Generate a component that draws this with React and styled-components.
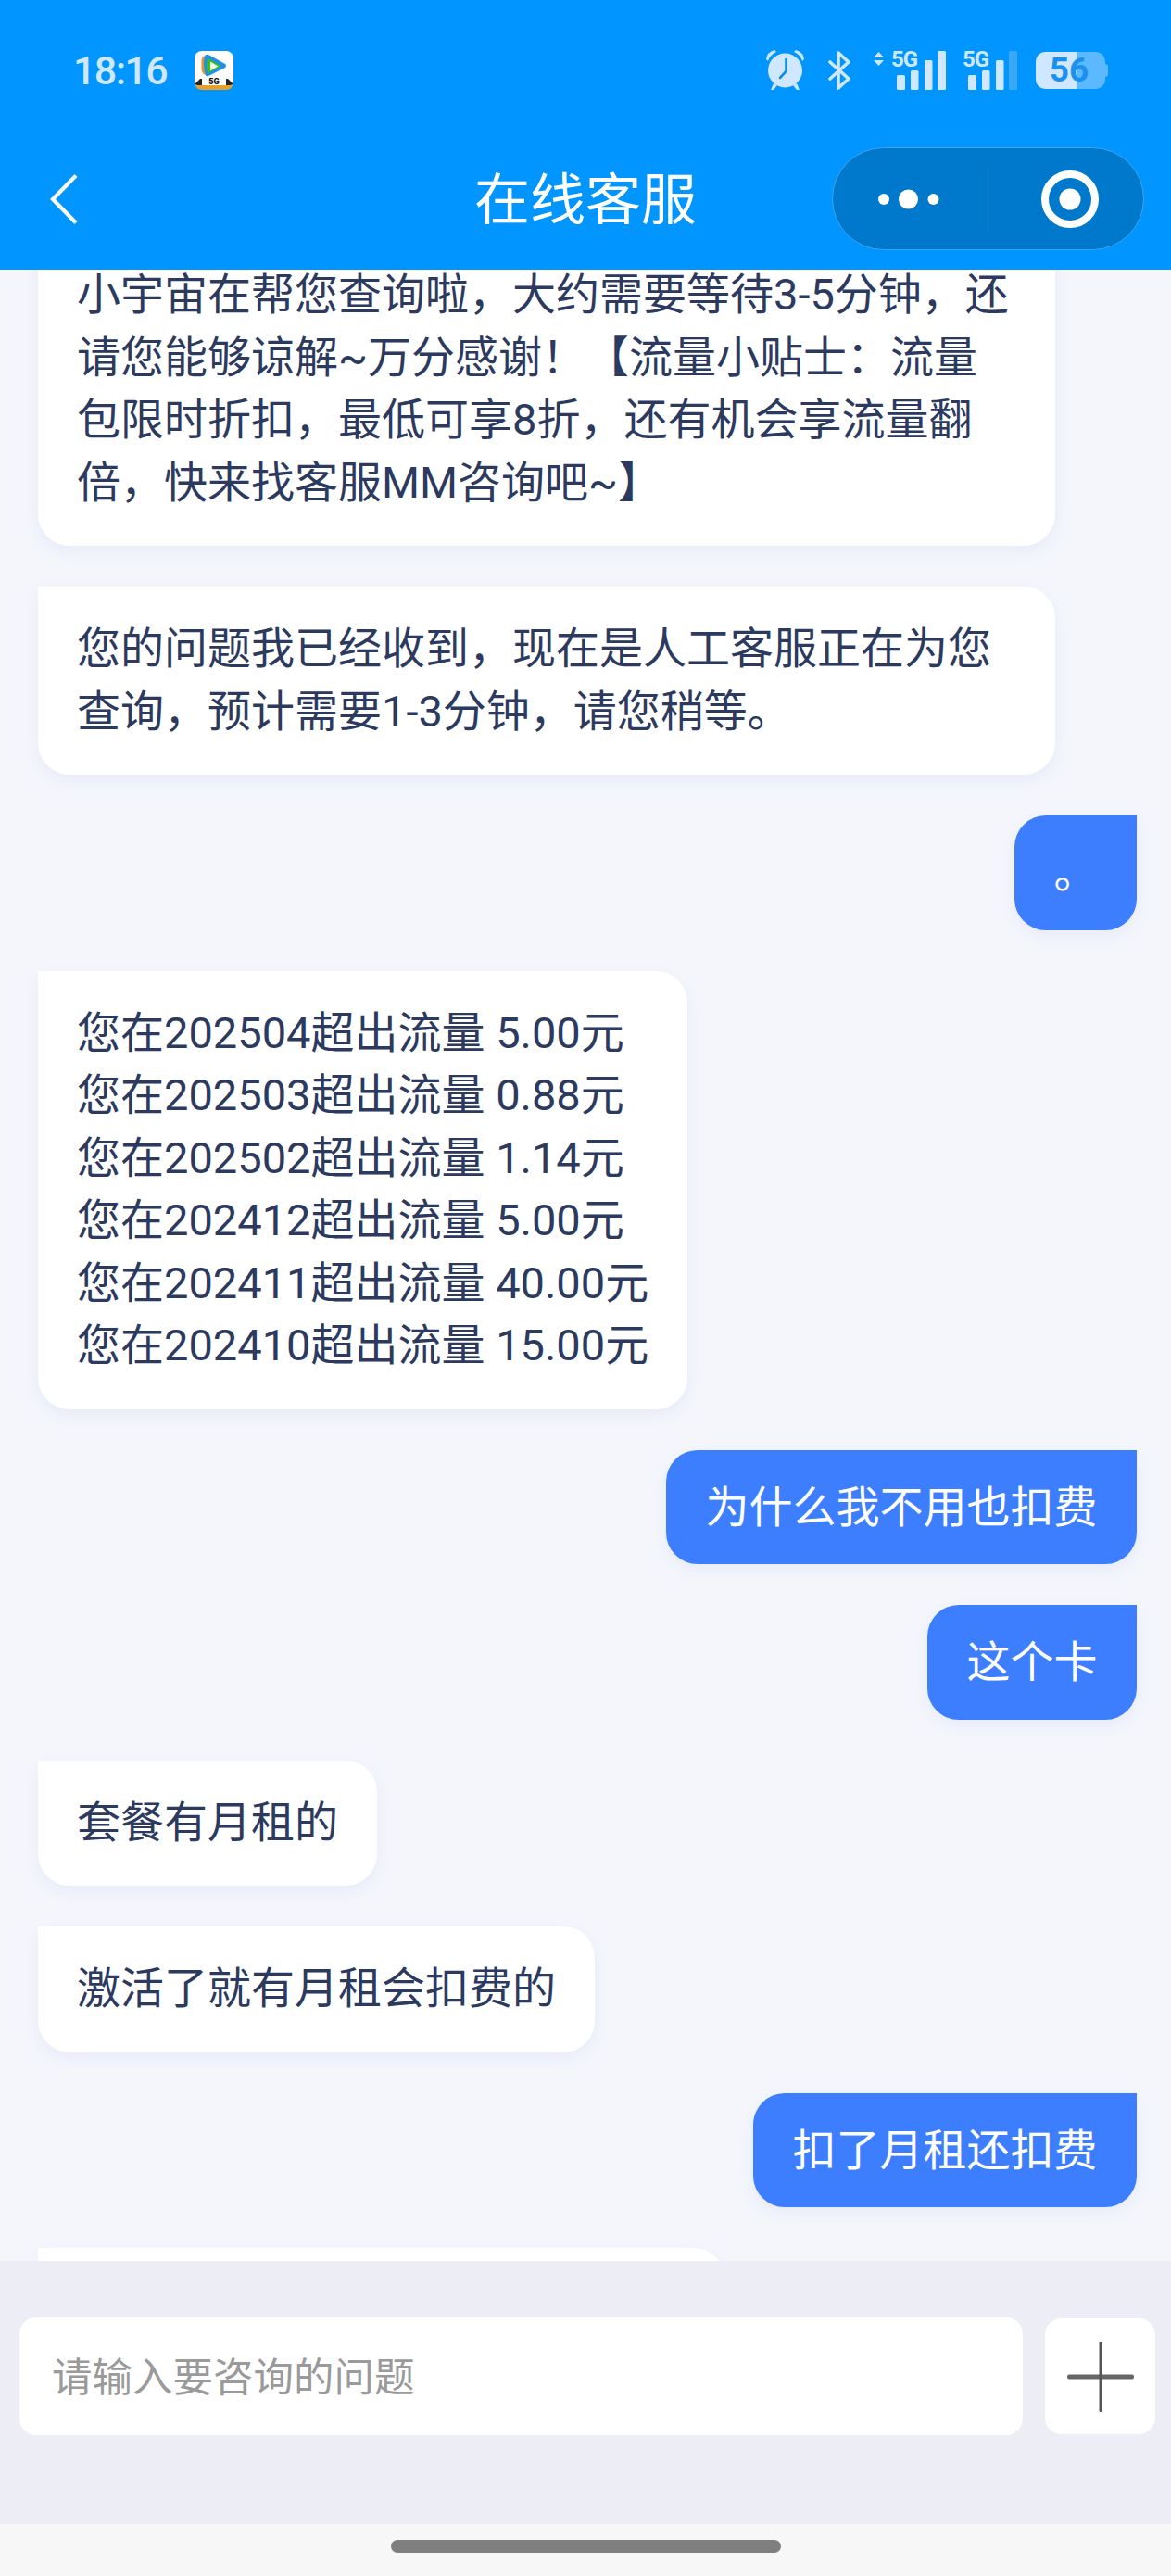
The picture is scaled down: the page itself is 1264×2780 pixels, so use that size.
import React from 'react'
import styled, { createGlobalStyle } from 'styled-components'

const GlobalStyle = createGlobalStyle`
  html, body {
    margin: 0;
    padding: 0;
    background: #f4f6fc;
  }
  * {
    box-sizing: border-box;
  }
`

const Page = styled.div`
  width: 1264px;
  height: 2780px;
  display: flex;
  flex-direction: column;
  overflow: hidden;
  background: #f4f6fc;
  font-family: Roboto, 'Noto Sans CJK SC', 'Noto Sans', sans-serif;
`

const Header = styled.header`
  flex: 0 0 291px;
  background: #0095ff;
  position: relative;
  z-index: 2;
`

const StatusBar = styled.div`
  height: 151px;
  display: flex;
  align-items: center;
  padding: 0 71px 0 79px;
`

const Time = styled.span`
  font-family: Roboto, 'Liberation Sans', sans-serif;
  font-size: 43px;
  font-weight: 500;
  letter-spacing: -1.6px;
  color: #cfe8ff;
  margin-right: 30px;
`

const StatusIcons = styled.div`
  margin-left: auto;
  display: flex;
  align-items: center;
  gap: 25px;
`

const SignalGroup = styled.div`
  display: flex;
  align-items: center;
  gap: 15px;
  height: 50px;
  margin-top: -6px;
  margin-right: -7px;
`

const Battery = styled.div`
  position: relative;
  width: 75px;
  height: 40px;
  border-radius: 10px;
  background: linear-gradient(to right, #cfe8ff 0 44px, #5cb8ff 44px 100%);
  display: flex;
  align-items: center;
  justify-content: center;
  font-family: Roboto, 'Liberation Sans', sans-serif;
  font-size: 37px;
  font-weight: 700;
  color: #1c90ee;
  line-height: 40px;
  padding-right: 3px;

  &::after {
    content: '';
    position: absolute;
    top: 13px;
    right: -3px;
    width: 3px;
    height: 14px;
    border-radius: 0 3px 3px 0;
    background: #5cb8ff;
  }
`

const NavBar = styled.nav`
  display: grid;
  grid-template-columns: 1fr auto 1fr;
  align-items: center;
  padding: 8px 29px 21px 29px;
`

const BackButton = styled.div`
  display: flex;
  align-items: center;
  padding-left: 25px;
`

const Title = styled.h1`
  margin: 4px 0 0;
  font-size: 60px;
  font-weight: 400;
  line-height: 80px;
  color: #fff;
`

const Capsule = styled.div`
  justify-self: end;
  width: 337px;
  height: 111px;
  border-radius: 56px;
  background: #0079cc;
  border: 1.5px solid #3fa5ee;
  display: flex;
  align-items: center;
`

const CapsuleCell = styled.div`
  flex: ${(p) => (p.$divided ? '1' : '0 0 167px')};
  height: 67px;
  display: flex;
  align-items: center;
  justify-content: center;
  border-left: ${(p) => (p.$divided ? '1.5px solid #3fa5ee' : 'none')};
  padding: ${(p) => (p.$divided ? '0 0 0 8px' : '0 3px 0 0')};
`

const ChatArea = styled.main`
  flex: 1;
  min-height: 0;
  overflow: hidden;
`

const MessageList = styled.div`
  display: flex;
  flex-direction: column;
  gap: 44px;
  margin-top: -40px;
  padding: 0 37px 0 41px;
`

const Bubble = styled.div`
  width: ${(p) => p.$width || 'fit-content'};
  font-size: 47px;
  line-height: 67.5px;
  white-space: nowrap;
  box-shadow: 0 6px 16px rgba(70, 100, 200, 0.07);
`

const AgentBubble = styled(Bubble)`
  align-self: flex-start;
  padding: 33px 42px 35px;
  color: #2c3a60;
  background: #fff;
  border-radius: 0 34px 34px 34px;
`

const UserBubble = styled(Bubble)`
  align-self: flex-end;
  padding: 28px 42.5px;
  color: #fff;
  background: #3d7eff;
  border-radius: 34px 0 34px 34px;
`

const InputPanel = styled.footer`
  flex: 0 0 284px;
  position: relative;
  z-index: 2;
  background: #ecedf5;
  display: flex;
  align-items: flex-start;
  gap: 24px;
  padding: 61px 17px 0 21px;
`

const TextInput = styled.input`
  flex: 1;
  min-width: 0;
  height: 127px;
  border: none;
  outline: none;
  border-radius: 18px;
  background: #fff;
  padding: 3px 35px 0;
  font-family: inherit;
  font-size: 43.5px;
  color: #2c3a60;

  &::placeholder {
    color: #9a9a9a;
    opacity: 1;
  }
`

const AddButton = styled.div`
  flex: 0 0 119px;
  height: 125px;
  margin-top: 1px;
  border-radius: 18px;
  background: #fff;
  display: flex;
  align-items: center;
  justify-content: center;
`

const HomeArea = styled.div`
  flex: 0 0 56px;
  position: relative;
  z-index: 2;
  background: #f7f7f7;
  display: flex;
  justify-content: center;
  padding-top: 17px;
`

const HomeBar = styled.div`
  width: 421px;
  height: 14px;
  border-radius: 7px;
  background: #7f7f7f;
`

const AppIcon = () => (
  <svg width="42" height="42" viewBox="0 0 42 42">
    <rect x="0" y="0" width="42" height="41" rx="8" fill="#fff" />
    <path d="M1 35 H41 Q41 42 34 42 H8 Q1 42 1 35 Z" fill="#e5a12c" />
    <path d="M0 36 L6 30 H36 L42 36 L38 37 H4 Z" fill="#222" />
    <rect x="8" y="29" width="26" height="8" fill="#fff" />
    <path d="M11 5 Q7 7 7.5 12 V20 Q8 25 12 26 Q9 15 11 5 Z" fill="#e5932c" />
    <path d="M13 4 Q11 4 10.5 7 Q9 16 11.5 25 Q12 28 15 27 L33 18 Q35 16 33 14 L16 4.5 Q14 3.8 13 4 Z" fill="#1f8fe8" />
    <path d="M14 8 Q12 16 14 24 L27 17.5 Q28 16 27 15 Z" fill="#34c11e" />
    <path d="M17 11.5 V21.5 L25.5 16.5 Z" fill="#f4f8e8" />
    <text x="21" y="36" textAnchor="middle" fontFamily="Roboto, sans-serif" fontSize="9" fontWeight="900" fill="#111">5G</text>
  </svg>
)

const AlarmIcon = () => (
  <svg width="43" height="45" viewBox="0 0 43 45" fill="#cfe8ff">
    <path d="M1 11 Q2 3 10 1 L12 3 Q5 6 3 13 Z" />
    <path d="M42 11 Q41 3 33 1 L31 3 Q38 6 40 13 Z" />
    <path d="M9 37 L6 44 H9 L13 39 Z" />
    <path d="M34 37 L37 44 H34 L30 39 Z" />
    <circle cx="21.5" cy="23" r="18.5" />
    <path d="M22.5 11 V24 L16 31" fill="none" stroke="#0d8fe8" strokeWidth="2.6" strokeLinecap="round" strokeLinejoin="round" />
  </svg>
)

const BluetoothIcon = () => (
  <svg width="24" height="42" viewBox="0 0 24 42" fill="none" stroke="#cfe8ff" strokeWidth="3.6" strokeLinejoin="round" strokeLinecap="round">
    <path d="M2 12 L22 30 L11 40 V2 L22 12 L2 30" />
  </svg>
)

const SignalIcon = ({ label, arrows, dimLast }) => (
  <svg width={arrows ? 80 : 62} height="50" viewBox={arrows ? '0 -6 80 50' : '18 -6 62 50'}>
    {arrows && (
      <g fill="#cfe8ff">
        <path d="M0 8 L5.5 2 L11 8 Z" />
        <path d="M0 11 L5.5 17 L11 11 Z" />
      </g>
    )}
    <text x="19" y="18" fontFamily="Roboto, 'Liberation Sans', sans-serif" fontSize="24" fontWeight="700" fill="#cfe8ff" letterSpacing="-1">{label}</text>
    <rect x="25" y="27" width="9" height="16" rx="1.5" fill="#cfe8ff" />
    <rect x="40" y="22" width="8.5" height="21" rx="1.5" fill="#cfe8ff" />
    <rect x="55" y="11" width="8.5" height="32" rx="1.5" fill="#cfe8ff" />
    <rect x="69" y="1" width="9" height="42" rx="1.5" fill={dimLast ? '#3ba8f7' : '#cfe8ff'} />
  </svg>
)

const BackIcon = () => (
  <svg width="30" height="54" viewBox="0 0 30 54" fill="none" stroke="#fff" strokeWidth="4.2">
    <path d="M28 1.5 L3 27 L28 52.5" />
  </svg>
)

const DotsIcon = () => (
  <svg width="66" height="24" viewBox="0 0 66 24" fill="#fff">
    <circle cx="6" cy="12" r="6" />
    <circle cx="32.5" cy="12" r="10.5" />
    <circle cx="59.5" cy="12" r="6" />
  </svg>
)

const RecordIcon = () => (
  <svg width="62" height="62" viewBox="0 0 62 62">
    <circle cx="31" cy="31" r="27" fill="none" stroke="#fff" strokeWidth="8" />
    <circle cx="31" cy="31" r="11.5" fill="#fff" />
  </svg>
)

const PlusIcon = () => (
  <svg width="72" height="76" viewBox="0 0 72 76">
    <rect x="0" y="35.5" width="72" height="5" rx="2" fill="#666" />
    <rect x="34.5" y="0" width="3" height="76" rx="1.5" fill="#555" />
  </svg>
)

const billLines = [
  '您在202504超出流量 5.00元',
  '您在202503超出流量 0.88元',
  '您在202502超出流量 1.14元',
  '您在202412超出流量 5.00元',
  '您在202411超出流量 40.00元',
  '您在202410超出流量 15.00元',
]

const App = () => {
  return (
    <Page>
      <GlobalStyle />
      <Header>
        <StatusBar>
          <Time>18:16</Time>
          <AppIcon />
          <StatusIcons>
            <AlarmIcon />
            <BluetoothIcon />
            <SignalGroup>
              <SignalIcon label="5G" arrows />
              <SignalIcon label="5G" dimLast />
            </SignalGroup>
            <Battery>56</Battery>
          </StatusIcons>
        </StatusBar>
        <NavBar>
          <BackButton>
            <BackIcon />
          </BackButton>
          <Title>在线客服</Title>
          <Capsule>
            <CapsuleCell>
              <DotsIcon />
            </CapsuleCell>
            <CapsuleCell $divided>
              <RecordIcon />
            </CapsuleCell>
          </Capsule>
        </NavBar>
      </Header>
      <ChatArea>
        <MessageList>
          <AgentBubble $width="1098px">
            小宇宙在帮您查询啦，大约需要等待3-5分钟，还
            <br />
            请您能够谅解~万分感谢！【流量小贴士：流量
            <br />
            包限时折扣，最低可享8折，还有机会享流量翻
            <br />
            倍，快来找客服MM咨询吧~】
          </AgentBubble>
          <AgentBubble $width="1098px">
            您的问题我已经收到，现在是人工客服正在为您
            <br />
            查询，预计需要1-3分钟，请您稍等。
          </AgentBubble>
          <UserBubble>。</UserBubble>
          <AgentBubble>
            {billLines.map((line) => (
              <div key={line}>{line}</div>
            ))}
          </AgentBubble>
          <UserBubble>为什么我不用也扣费</UserBubble>
          <UserBubble>这个卡</UserBubble>
          <AgentBubble>套餐有月租的</AgentBubble>
          <AgentBubble>激活了就有月租会扣费的</AgentBubble>
          <UserBubble>扣了月租还扣费</UserBubble>
          <AgentBubble $width="742px">&nbsp;</AgentBubble>
        </MessageList>
      </ChatArea>
      <InputPanel>
        <TextInput placeholder="请输入要咨询的问题" readOnly />
        <AddButton>
          <PlusIcon />
        </AddButton>
      </InputPanel>
      <HomeArea>
        <HomeBar />
      </HomeArea>
    </Page>
  )
}

export default App
